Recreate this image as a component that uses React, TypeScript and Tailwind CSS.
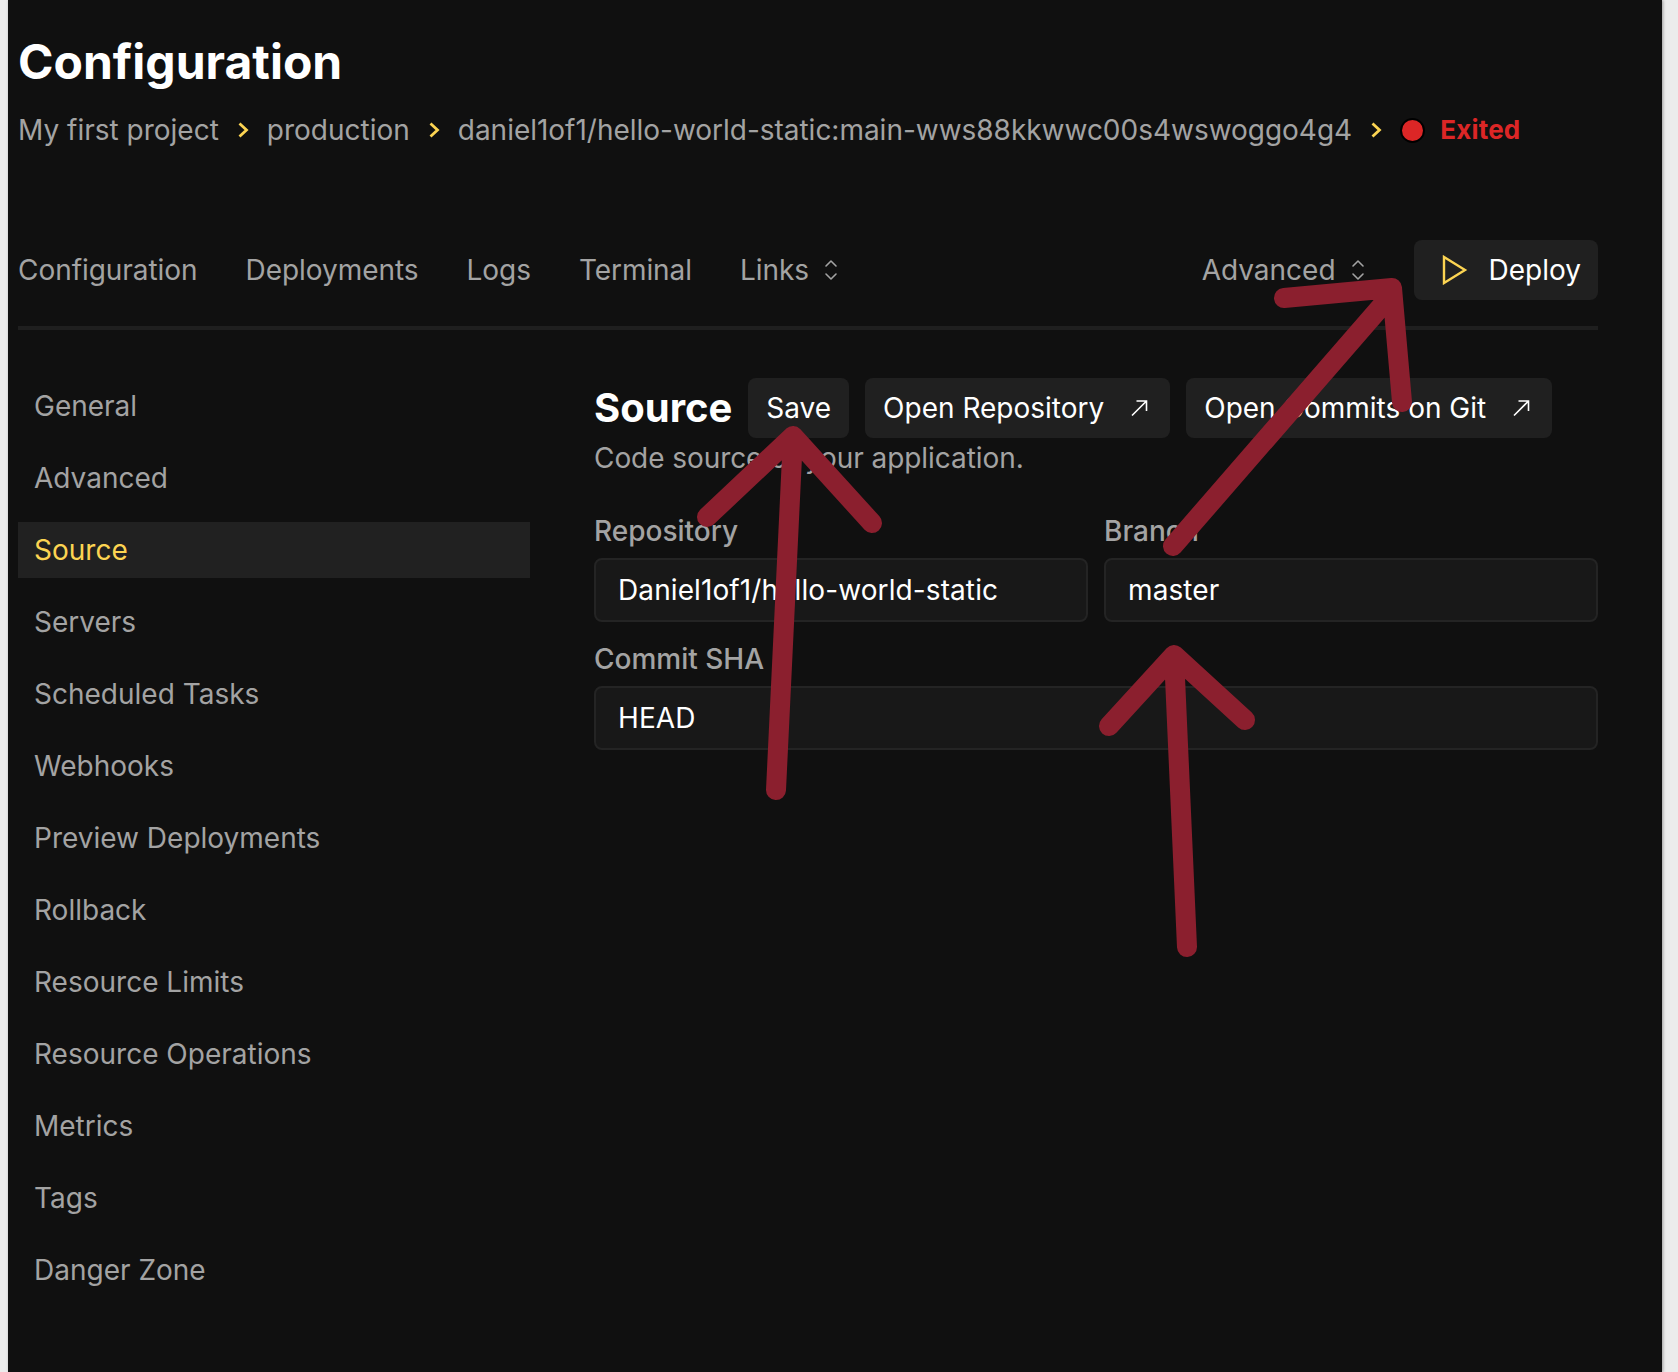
const sideItems = [
  "General",
  "Advanced",
  "Source",
  "Servers",
  "Scheduled Tasks",
  "Webhooks",
  "Preview Deployments",
  "Rollback",
  "Resource Limits",
  "Resource Operations",
  "Metrics",
  "Tags",
  "Danger Zone",
];

const Chevron = () => (
  <svg width="12" height="18" viewBox="0 0 12 18" fill="none" className="mx-[18px] shrink-0">
    <path d="M2.5 2.5L9.5 9l-7 6.5" stroke="#fcd452" strokeWidth="2.8" />
  </svg>
);

const UpDown = () => (
  <svg width="16" height="24" viewBox="0 0 16 24" fill="none" className="ml-[14px] shrink-0">
    <path d="M3 8l5-5 5 5M3 16l5 5 5-5" stroke="#a3a3a3" strokeWidth="1.6" strokeLinecap="round" strokeLinejoin="round" />
  </svg>
);

const External = () => (
  <svg width="18" height="18" viewBox="0 0 18 18" fill="none" className="ml-[26px] mr-1 shrink-0">
    <path d="M2 16.5L16 2.5M6.5 2H16.5v10" stroke="#fff" strokeWidth="1.6" />
  </svg>
);

const Btn = ({ children }: { children: React.ReactNode }) => (
  <div className="flex h-[60px] items-center rounded-lg bg-[#202020] px-[18px] text-[28px] text-white">
    {children}
  </div>
);

const Field = ({ label, value }: { label: string; value: string }) => (
  <div className="flex flex-1 flex-col">
    <div className="h-[45px] text-[28px] font-medium leading-[36px] text-[#a3a3a3]">{label}</div>
    <div className="flex h-16 items-center rounded-lg border-2 border-[#242424] bg-[#181818] px-[22px] text-[28px] tracking-[0.1px] text-white">
      {value}
    </div>
  </div>
);

export default function App() {
  return (
    <div className="relative h-[1372px] w-[1678px] overflow-hidden bg-[#ececec] font-['Inter',sans-serif] antialiased">
      <div className="ml-2 h-full w-[1654px] bg-[#101010] pl-[10px] pr-[64px] shadow-[1px_0_3px_rgba(0,0,0,0.35)]">
        <h1 className="pt-[32px] text-[48px] font-bold leading-[60px] text-white">Configuration</h1>
        <div className="mt-[18px] flex h-[40px] items-center whitespace-nowrap text-[28px] text-[#a3a3a3]">
          <span>My first project</span>
          <Chevron />
          <span>production</span>
          <Chevron />
          <span className="tracking-[-0.02px]">daniel1of1/hello-world-static:main-wws88kkwwc00s4wswoggo4g4</span>
          <Chevron />
          <span className="h-[25px] w-[25px] rounded-full border-2 border-black bg-[#dc2626]" />
          <span className="ml-[15px] -translate-y-px text-[26px] font-bold tracking-[0.2px] text-[#dc2626]">Exited</span>
        </div>
        <div className="mt-[90px] flex h-[90px] items-start justify-between border-b-4 border-[#1f1f1f] text-[28px] text-[#a3a3a3]">
          <div className="flex h-[60px] items-center gap-12 tracking-[-0.05px]">
            <span>Configuration</span>
            <span>Deployments</span>
            <span>Logs</span>
            <span>Terminal</span>
            <span className="flex items-center">Links<UpDown /></span>
          </div>
          <div className="flex items-center gap-12">
            <span className="flex items-center">Advanced<UpDown /></span>
            <div className="flex h-[60px] items-center rounded-lg bg-[#202020] pl-[25px] pr-[17px] text-white">
              <svg width="30" height="30" viewBox="0 0 30 30" fill="none" className="mr-[20px]">
                <path d="M5 2l21 13L5 28z" stroke="#fcd452" strokeWidth="2.4" />
              </svg>
              Deploy
            </div>
          </div>
        </div>
        <div className="mt-[48px] flex gap-16">
          <div className="flex w-[512px] flex-col gap-4">
            {sideItems.map((item) => (
              <div
                key={item}
                className={
                  item === "Source"
                    ? "flex h-14 items-center bg-[#212121] px-4 text-[28px] text-[#fcd452]"
                    : "flex h-14 items-center px-4 text-[28px] text-[#a3a3a3]"
                }
              >
                {item}
              </div>
            ))}
          </div>
          <div className="flex-1">
            <div className="flex items-center gap-4">
              <h2 className="text-[40px] font-bold text-white">Source</h2>
              <Btn>Save</Btn>
              <Btn>Open Repository<External /></Btn>
              <Btn>Open Commits on Git<External /></Btn>
            </div>
            <p className="text-[28px] leading-[40px] tracking-[-0.07px] text-[#a3a3a3]">Code source of your application.</p>
            <div className="mt-[35px] flex flex-col gap-[19px]">
              <div className="flex gap-4">
                <Field label="Repository" value="Daniel1of1/hello-world-static" />
                <Field label="Branch" value="master" />
              </div>
              <Field label="Commit SHA" value="HEAD" />
            </div>
          </div>
        </div>
      </div>
      <svg className="absolute inset-0" width="1678" height="1372" fill="none">
        <g stroke="#8b1f2e" strokeWidth="20" strokeLinecap="round" strokeLinejoin="round">
          <path d="M776 790L793 436M707 517L793 436L872 523" />
          <path d="M1187 947L1174 655M1109 726L1174 655L1245 720" />
          <path d="M1173 546L1392 294M1284 298L1392 288L1402 402" />
        </g>
      </svg>
    </div>
  );
}
